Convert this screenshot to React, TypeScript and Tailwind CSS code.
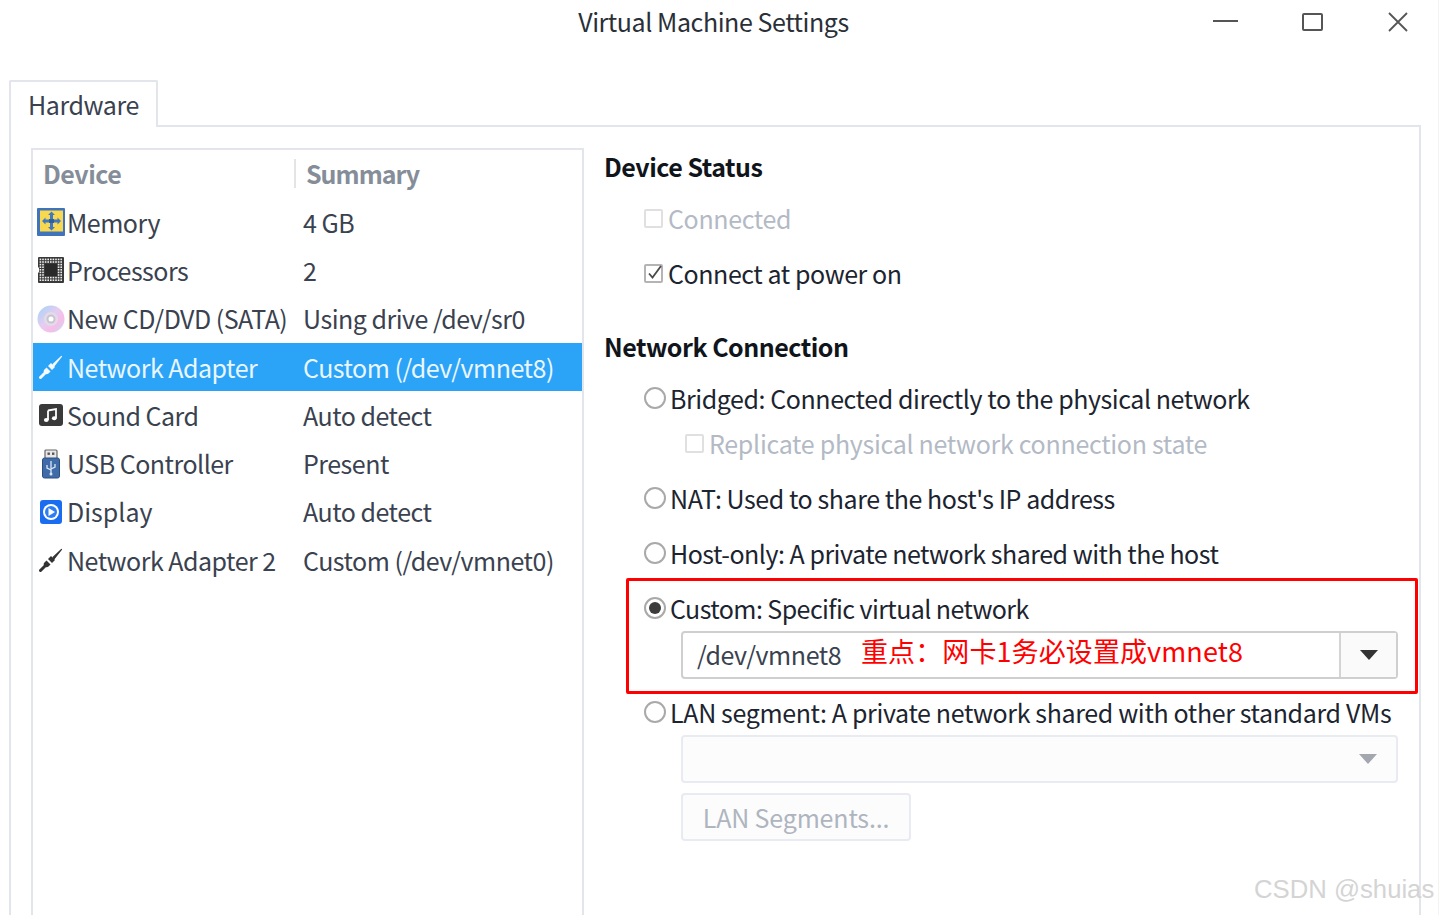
import React from "react";

const F = '"Noto Sans CJK SC", "Noto Sans", sans-serif';

function MemoryIcon() {
  return (
    <svg width="28" height="28" viewBox="0 0 28 28">
      <rect x="0" y="0" width="28" height="28" rx="1" fill="#3f74bd" />
      <rect x="3" y="2.500" width="23" height="21" fill="#f7d84e" />
      <path d="M14.500 3.500l3.500 3.500h-2v4.500h4.500v-2l3.500 3.500-3.500 3.500v-2H16v4.500h2l-3.500 3.500-3.500-3.500h2v-4.500H8.500v2L5 13l3.500-3.500v2H13V7h-2z" fill="#4478bd" />
      <rect x="12" y="11" width="5" height="4" fill="#2e5f9f" />
    </svg>
  );
}

function ProcessorIcon() {
  const dots: React.ReactElement[] = [];
  for (let i = 0; i < 9; i++)
    for (let j = 0; j < 9; j++) {
      if (i >= 2 && i <= 6 && j >= 2 && j <= 6) continue;
      dots.push(<rect key={i + "-" + j} x={2.6 + i * 2.6} y={2.6 + j * 2.6} width="1.6" height="1.6" fill="#efefef" />);
    }
  return (
    <svg width="28" height="28" viewBox="0 0 28 28">
      <path d="M1 2a1 1 0 0 1 1-1h24a1 1 0 0 1 1 1v24a1 1 0 0 1-1 1H2a1 1 0 0 1-1-1v-9l1-1v-4l-1-1z" fill="#3a3a3a" />
      {dots}
      <rect x="8" y="8" width="12" height="12" fill="#2a2a2a" />
    </svg>
  );
}

function CdIcon() {
  return (
    <svg width="28" height="28" viewBox="0 0 28 28">
      <defs>
        <linearGradient id="cd" x1="0" y1="0" x2="1" y2="1">
          <stop offset="0" stopColor="#9fd4f7" />
          <stop offset="0.45" stopColor="#e4cdf2" />
          <stop offset="0.7" stopColor="#f7bde8" />
          <stop offset="1" stopColor="#bfe0f7" />
        </linearGradient>
      </defs>
      <circle cx="14" cy="14" r="13.500" fill="url(#cd)" />
      <circle cx="14" cy="14" r="7" fill="#e2dce8" />
      <circle cx="14" cy="14" r="4.500" fill="#c9c4d2" />
      <circle cx="14" cy="14" r="2.500" fill="#ffffff" />
    </svg>
  );
}

function PlugIcon({ color }: { color: string }) {
  return (
    <svg width="24" height="24" viewBox="0 0 24 24">
      <path d="M1.500 22.500l5.500-5.500" stroke={color} strokeWidth="3" strokeLinecap="round" />
      <path d="M5.500 14.500l2-2 4 4-2 2c-1.200 1-2.600 1-3.600 0l-.5-.5c-1-1-1-2.400.1-3.500z" fill={color} />
      <path d="M9 11l3-3 4 4-3 3z" fill={color} />
      <path d="M14 9.500L22.500 1.500 15 11z" fill={color} stroke={color} strokeWidth="1.200" strokeLinejoin="round" />
    </svg>
  );
}

function SoundIcon() {
  return (
    <svg width="26" height="24" viewBox="0 0 26 24">
      <rect x="1" y="1" width="24" height="22" rx="3" fill="#3a3a3a" />
      <path d="M10 7.500l8-1.500v9" fill="none" stroke="#fff" strokeWidth="1.800" />
      <path d="M10 7.500V17" stroke="#fff" strokeWidth="1.800" />
      <ellipse cx="8.300" cy="17" rx="2.400" ry="2" fill="#fff" />
      <ellipse cx="16.300" cy="15.200" rx="2.400" ry="2" fill="#fff" />
    </svg>
  );
}

function UsbIcon() {
  return (
    <svg width="20" height="30" viewBox="0 0 20 30">
      <rect x="4" y="1" width="12" height="9" rx="1" fill="#e8e8e8" stroke="#666" strokeWidth="1.200" />
      <rect x="6.500" y="3.500" width="2.400" height="2.400" fill="#555" />
      <rect x="11" y="3.500" width="2.400" height="2.400" fill="#555" />
      <rect x="1.500" y="9" width="17" height="20" rx="2" fill="#3f6ca8" stroke="#2d4f80" />
      <path d="M10 12v13M6 16v3l4 2M14 15v3l-4 2" fill="none" stroke="#dbe6f5" strokeWidth="1.300" />
      <circle cx="10" cy="25" r="1.500" fill="#dbe6f5" />
    </svg>
  );
}

function DisplayIcon() {
  return (
    <svg width="24" height="26" viewBox="0 0 24 26">
      <rect x="1" y="1" width="22" height="24" rx="3" fill="#1a6df0" />
      <circle cx="12" cy="13" r="8" fill="#fff" />
      <circle cx="12" cy="13" r="6" fill="#2f7df2" />
      <path d="M9.500 9l6.500 4-6.500 4z" fill="#fff" />
    </svg>
  );
}

function Row({ icon, device, summary, selected, iconClass, deviceClass }: { icon: React.ReactNode; device: string; summary: string; selected?: boolean; iconClass?: string; deviceClass?: string }) {
  return (
    <div className={"flex h-[48.3px] items-center tracking-[-0.5px] " + (selected ? "bg-[#2ba3f7] text-[#eaf6ff]" : "text-[#3a4250]")}>
      <div className="flex w-[270px] items-center">
        <div className={"flex h-[30px] w-[34px] shrink-0 items-center " + (iconClass ?? "pl-[3px]")}>{icon}</div>
        <span className={"whitespace-nowrap " + (deviceClass ?? "")}>{device}</span>
      </div>
      <span className="whitespace-nowrap">{summary}</span>
    </div>
  );
}

function Radio({ checked }: { checked?: boolean }) {
  return (
    <span className="mr-[4px] flex h-[22px] w-[22px] shrink-0 items-center justify-center rounded-full border-2 border-[#a9a9a9] bg-white">
      {checked && <span className="h-[12px] w-[12px] rounded-full bg-[#3c3c3c]" />}
    </span>
  );
}

function Check({ checked, disabled }: { checked?: boolean; disabled?: boolean }) {
  return (
    <span className={"relative mr-[5px] h-[19px] w-[19px] shrink-0 rounded-[2px] border-2 bg-white " + (disabled ? "border-[#e0e0e0]" : "border-[#b4b4b4]")}>
      {checked && (
        <svg className="absolute left-[-1px] top-[-3px]" width="20" height="20" viewBox="0 0 20 20">
          <path d="M4 10.500l3.500 4L16 3" fill="none" stroke="#4a4a4a" strokeWidth="1.800" />
        </svg>
      )}
    </span>
  );
}

function Caret({ color }: { color: string }) {
  return (
    <svg width="18" height="10" viewBox="0 0 18 10">
      <path d="M0 0h18l-9 10z" fill={color} />
    </svg>
  );
}

export default function App() {
  return (
    <div className="relative h-[915px] w-[1439px] overflow-hidden border-r border-[#f3f3f3] bg-white text-[25px] leading-none tracking-[-0.43px] text-[#1c2430]" style={{ fontFamily: F }}>
      <div className="relative flex h-[46px] items-center justify-center pb-[4px] pr-[11px] text-[#2a2f38]">
        Virtual Machine Settings
        <div className="absolute left-[1213px] top-[-1px] flex h-[46px] items-center">
          <svg width="26" height="26" viewBox="0 0 26 26"><path d="M0 12h25" stroke="#555" strokeWidth="2" /></svg>
          <svg className="ml-[58px]" width="30" height="26" viewBox="0 0 30 26"><rect x="6" y="5" width="19" height="16" rx="1" fill="none" stroke="#555" strokeWidth="2" /></svg>
          <svg className="ml-[60px]" width="22" height="26" viewBox="0 0 22 26"><path d="M2 4l18 18M20 4L2 22" stroke="#555" strokeWidth="1.800" /></svg>
        </div>
      </div>

      <div className="pl-[9px] pr-[17px] pt-[34px]">
        <div className="relative z-10 mb-[-2px] flex h-[47px] w-[149px] items-center rounded-t-[2px] border-2 border-b-0 border-[#e2e6ec] bg-white pl-[17px] text-[#3a4250]">
          Hardware
        </div>
        <div className="flex h-[800px] items-start border-2 border-[#e2e6ec] pl-[20px] pt-[21px]">
          <div className="h-[780px] w-[553px] shrink-0 border-2 border-[#e2e6ec] bg-white">
            <div className="flex h-[48px] items-center pb-[2px] font-bold tracking-[-0.5px] text-[#858d99]">
              <div className="flex h-[29px] w-[263px] items-center border-r-2 border-[#e4e4e4] pl-[10px]">Device</div>
              <div className="pl-[10px] tracking-[-1px]">Summary</div>
            </div>
            <Row icon={<MemoryIcon />} device="Memory" summary="4 GB" iconClass="pl-[4px]" />
            <Row icon={<ProcessorIcon />} device="Processors" summary="2" iconClass="pl-[4px]" />
            <Row icon={<CdIcon />} device="New CD/DVD (SATA)" summary="Using drive /dev/sr0" iconClass="pl-[4px]" />
            <Row icon={<PlugIcon color="#f4faff" />} device="Network Adapter" summary="Custom (/dev/vmnet8)" selected iconClass="pl-[6px]" />
            <Row icon={<SoundIcon />} device="Sound Card" summary="Auto detect" iconClass="pl-[5px]" />
            <Row icon={<UsbIcon />} device="USB Controller" summary="Present" iconClass="pl-[8px]" />
            <Row icon={<DisplayIcon />} device="Display" summary="Auto detect" iconClass="pl-[6px]" deviceClass="tracking-normal" />
            <Row icon={<PlugIcon color="#333" />} device="Network Adapter 2" summary="Custom (/dev/vmnet0)" iconClass="pl-[6px]" />
          </div>

          <div className="ml-[20px] flex-1 whitespace-nowrap">
            <div className="mt-[-1px] flex h-[38px] items-center font-bold tracking-[-0.5px] text-[#10151c]">Device Status</div>
            <div className="pl-[40px]">
              <div className="mt-[15px] flex h-[36px] items-center tracking-[-0.35px] text-[#b3bac5]"><Check disabled />Connected</div>
              <div className="mt-[19px] flex h-[36px] items-center"><Check checked />Connect at power on</div>
            </div>
            <div className="mt-[36px] flex h-[38px] items-center font-bold tracking-[-0.5px] text-[#10151c]">Network Connection</div>
            <div className="pl-[40px]">
              <div className="mt-[15px] flex h-[36px] items-center"><Radio />Bridged: Connected directly to the physical network</div>
              <div className="ml-[41px] mt-[9px] flex h-[36px] items-center tracking-[-0.29px] text-[#b3bac5]"><Check disabled />Replicate physical network connection state</div>
              <div className="mt-[19px] flex h-[36px] items-center"><Radio />NAT: Used to share the host's IP address</div>
              <div className="mt-[19px] flex h-[36px] items-center tracking-[-0.49px]"><Radio />Host-only: A private network shared with the host</div>
              <div className="mt-[19px] flex h-[36px] items-center tracking-[-0.57px]"><Radio checked />Custom: Specific virtual network</div>
              <div className="ml-[37px] mt-[5px] flex h-[48px] w-[717px] items-stretch rounded-[4px] border-2 border-[#cfcfcf] bg-white">
                <div className="flex flex-1 items-center pb-[2px] pl-[14px] text-[#3a4250]">/dev/vmnet8</div>
                <div className="flex w-[57px] items-center justify-center border-l-2 border-[#d4d4d4] bg-[#fafafa]"><Caret color="#333" /></div>
              </div>
              <div className="mt-[15px] flex h-[36px] items-center tracking-[-0.36px]"><Radio />LAN segment: A private network shared with other standard VMs</div>
              <div className="ml-[37px] mt-[5px] flex h-[48px] w-[717px] items-center justify-end rounded-[4px] border-2 border-[#e8ebf2] bg-[#fcfcfd] pr-[19px]"><Caret color="#a4a7ae" /></div>
              <div className="ml-[37px] mt-[10px] flex h-[48px] w-[230px] items-center justify-center rounded-[4px] border-2 border-[#e8ebf2] bg-[#fcfcfd] tracking-[-0.17px] text-[#aeb5bf]">LAN Segments...</div>
            </div>
          </div>
        </div>
      </div>

      <div className="pointer-events-none absolute left-[626px] top-[578px] h-[116px] w-[792px] rounded-[2px] border-[3px] border-[#ff0000]" />
      <div className="absolute left-[861px] top-[634px] whitespace-nowrap text-[27px] leading-[34px] tracking-[0.1px] text-[#ff0000]">重点：网卡1务必设置成vmnet8</div>
      <div className="absolute left-[1254px] top-[872px] whitespace-nowrap text-[25.7px] leading-[34px] tracking-normal text-[#d4d4d4]" style={{ fontFamily: '"Liberation Sans", sans-serif' }}>CSDN @shuias</div>
    </div>
  );
}
